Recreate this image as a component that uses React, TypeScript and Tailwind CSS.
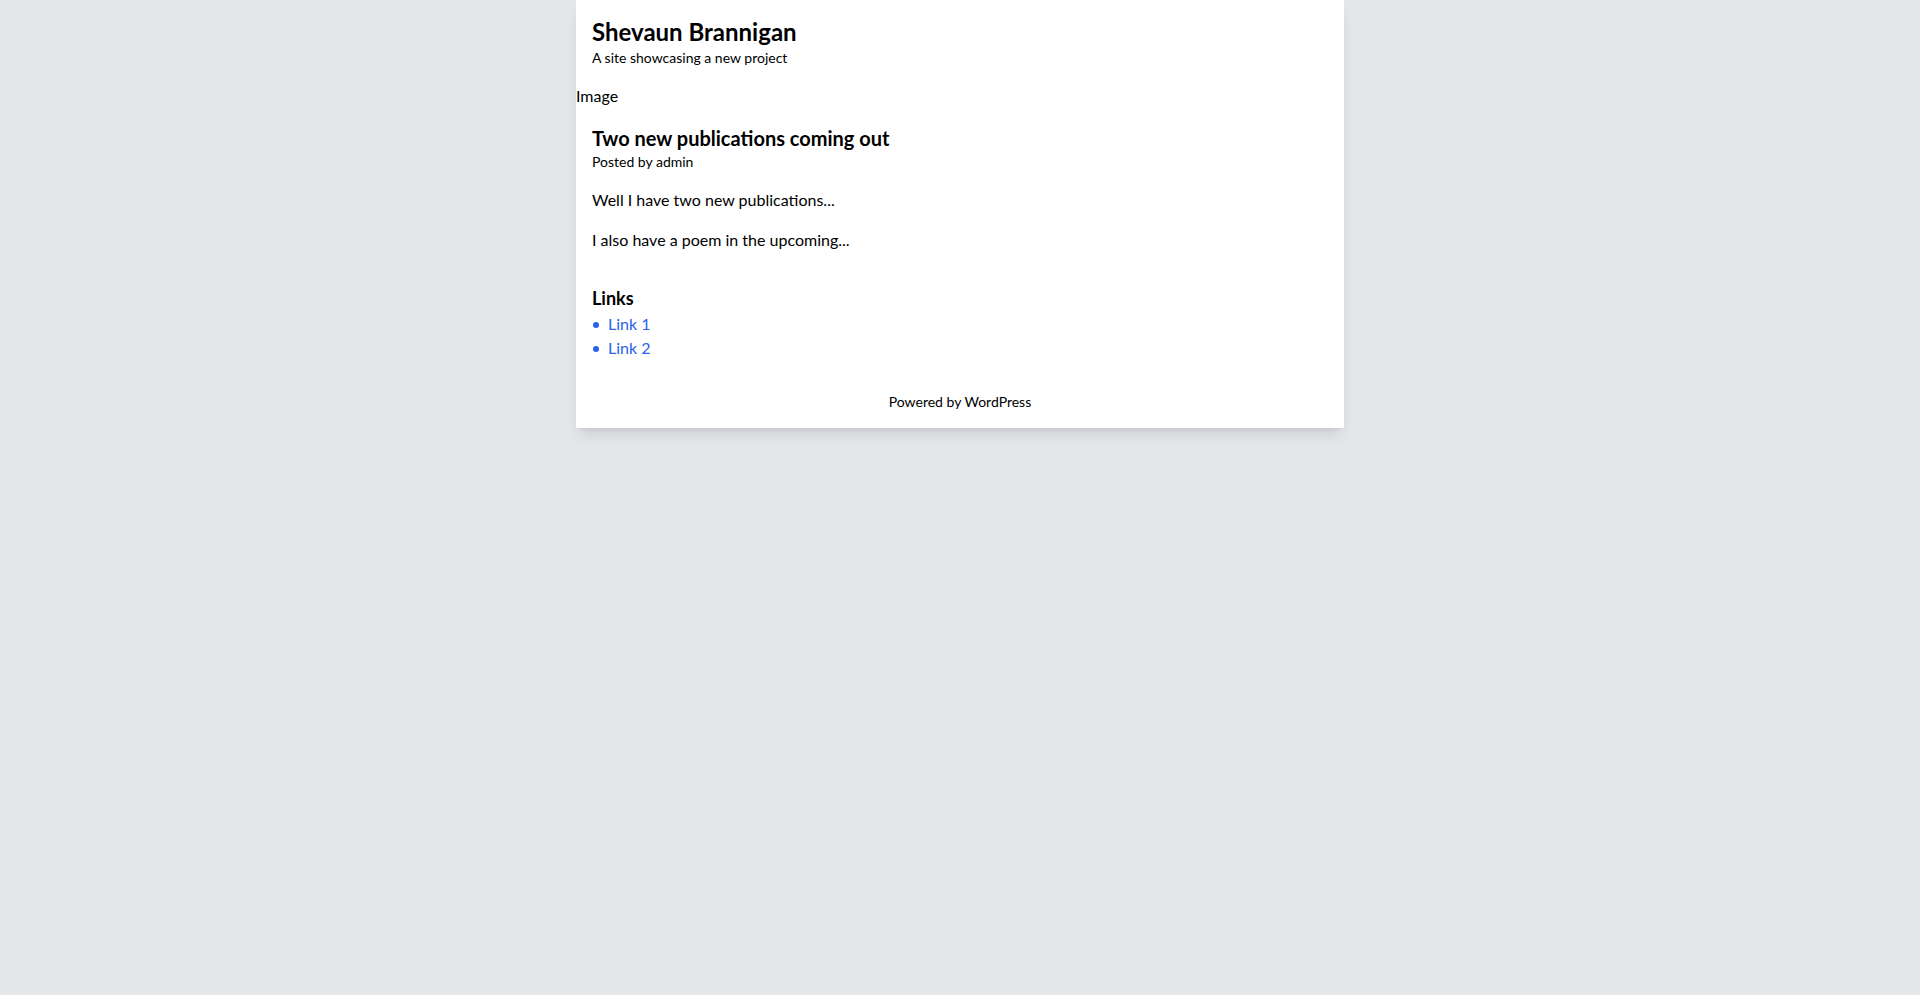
export default function App() {
  return (
    <div className="min-h-screen bg-gray-200 font-['Lato',sans-serif] text-black">
      <div className="max-w-3xl mx-auto bg-white shadow-lg">
        <header className="p-4">
          <h1 className="text-2xl font-bold">Shevaun Brannigan</h1>
          <p className="text-sm">A site showcasing a new project</p>
        </header>

        <div>Image</div>

        <main className="p-4">
          <article>
            <h2 className="text-xl font-bold">Two new publications coming out</h2>
            <p className="text-sm">Posted by admin</p>
            <p className="mt-4">Well I have two new publications...</p>
            <p className="mt-4">I also have a poem in the upcoming...</p>
          </article>
        </main>

        <aside className="p-4">
          <h3 className="text-lg font-bold">Links</h3>
          <ul className="text-[#2563eb]">
            {['Link 1', 'Link 2'].map(l => (
              <li key={l} className="flex items-center">
                <span className="w-1.5 h-1.5 ml-px mr-[9px] mt-0.5 rounded-full bg-current" />
                <a href="#">{l}</a>
              </li>
            ))}
          </ul>
        </aside>

        <footer className="p-4 text-center text-sm">
          Powered by WordPress
        </footer>
      </div>
    </div>
  )
}
